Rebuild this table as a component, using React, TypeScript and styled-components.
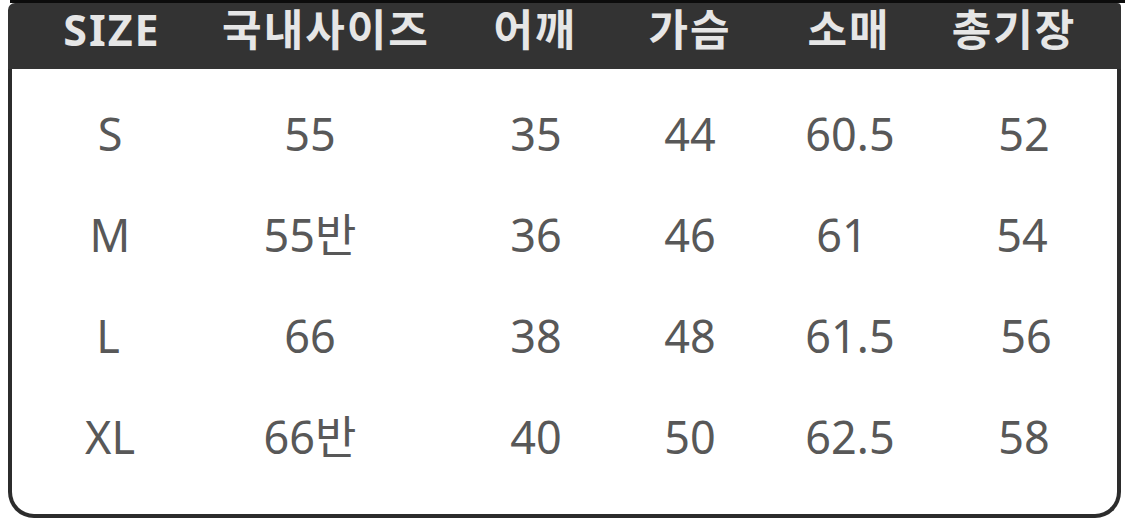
import React from 'react';
import styled, { createGlobalStyle } from 'styled-components';

const GlobalStyle = createGlobalStyle`
    html, body {
        margin: 0;
        padding: 0;
        background: #FFFFFF;
    }
`

const FONT = `"Noto Sans", "Noto Sans CJK KR", sans-serif`;

const Page = styled.div`
    width: 1125px;
    height: 518px;
    overflow: hidden;
    display: flex;
    flex-direction: column;
    font-family: ${FONT};
`

const TopStrip = styled.div`
    height: 3px;
    margin-left: 10px;
    background: #0c0c0c;
`

const Frame = styled.div`
    flex: 1;
    margin: 0 4px 0 8px;
    display: flex;
    flex-direction: column;
`

const Header = styled.div`
    height: 66px;
    box-sizing: border-box;
    padding-bottom: 14px;
    background: #333333;
    border-radius: 7px 4px 0 0;
    display: grid;
    grid-template-columns: 208px 220px 198px 112px 206px 124px;
    align-items: center;
`

const HeadCell = styled.div`
    display: flex;
    justify-content: center;
    white-space: nowrap;
    line-height: 1;
    font-size: 43px;
    font-weight: 700;
    letter-spacing: 2px;
    color: #e6e6e6;
`

const Body = styled.div`
    flex: 1;
    background: #FFFFFF;
    border: 4px solid #2c2c2c;
    border-top: none;
    border-radius: 0 0 26px 26px;
    padding-top: 14px;
`

const Row = styled.div`
    height: 101px;
    display: grid;
    grid-template-columns: 196px 204px 248px 60px 260px 88px;
    align-items: center;
`

const Cell = styled.div<{ $shift?: number }>`
    display: flex;
    justify-content: center;
    white-space: nowrap;
    line-height: 1;
    font-size: 45px;
    color: #585858;
    transform: translateX(${p => p.$shift || 0}px);
`

const headers = ['SIZE', '국내사이즈', '어깨', '가슴', '소매', '총기장'];

// [text, x nudge] where a value sits off its column centre
const rows: (string | [string, number])[][] = [
    ['S', '55', '35', '44', '60.5', '52'],
    ['M', '55반', '36', '46', ['61', -8], ['54', -2]],
    [['L', -2], '66', '38', '48', '61.5', ['56', 2]],
    ['XL', '66반', '40', '50', '62.5', '58'],
];

const App = () => (
    <Page>
        <GlobalStyle />
        <TopStrip />
        <Frame>
            <Header>
                {headers.map(h => <HeadCell key={h}>{h}</HeadCell>)}
            </Header>
            <Body>
                {rows.map((row, i) => (
                    <Row key={i}>
                        {row.map((c, j) => {
                            const [text, shift] = Array.isArray(c) ? c : [c, 0];
                            return <Cell key={j} $shift={shift}>{text}</Cell>;
                        })}
                    </Row>
                ))}
            </Body>
        </Frame>
    </Page>
)

export default App;
